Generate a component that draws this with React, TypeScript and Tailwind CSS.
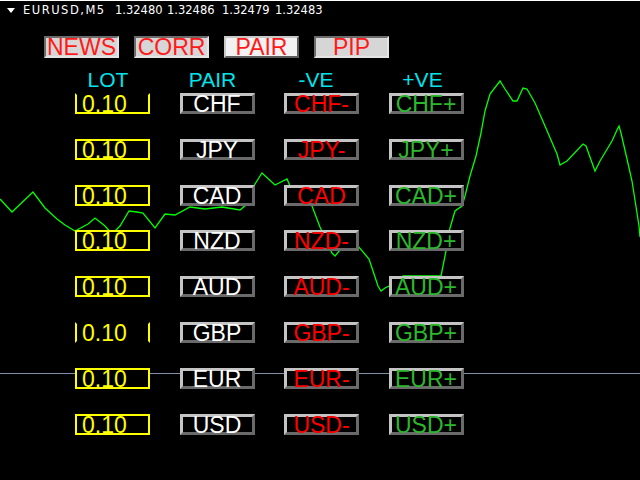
const rows = [
  { pair: "CHF", neg: "CHF-", lot: "full-no-top" },
  { pair: "JPY", neg: "JPY-", lot: "full" },
  { pair: "CAD", neg: "CAD", lot: "full" },
  { pair: "NZD", neg: "NZD-", lot: "full" },
  { pair: "AUD", neg: "AUD-", lot: "full" },
  { pair: "GBP", neg: "GBP-", lot: "sides" },
  { pair: "EUR", neg: "EUR-", lot: "full" },
  { pair: "USD", neg: "USD-", lot: "full" },
]

const price = [
  [0, 198], [12, 211], [33, 191], [45, 207], [57, 218], [65, 224], [75, 230], [88, 223],
  [95, 217], [105, 225], [112, 233], [120, 225], [129, 210], [137, 211], [143, 212],
  [155, 227], [165, 213], [175, 214], [190, 206], [205, 208], [222, 206], [240, 209],
  [247, 203], [255, 183], [262, 172], [275, 184], [287, 178], [290, 185], [300, 190],
  [312, 205], [320, 226], [332, 252], [335, 255], [340, 249], [358, 245], [369, 258],
  [373, 270], [378, 285], [381, 290], [385, 287], [395, 282], [403, 275], [418, 275],
  [441, 275], [446, 250], [450, 227], [455, 210], [462, 205], [465, 195], [470, 175],
  [476, 155], [481, 132], [485, 110], [490, 93], [500, 80], [505, 88], [513, 100],
  [517, 100], [523, 87], [527, 88], [535, 102], [545, 125], [557, 153], [560, 164],
  [567, 160], [583, 143], [586, 145], [595, 170], [600, 160], [612, 140], [617, 129],
  [619, 125], [621, 132], [627, 158], [632, 180], [637, 212], [639, 225], [640, 236],
]

function Chart() {
  return (
    <svg className="absolute inset-0 z-0" width="640" height="480" viewBox="0 0 640 480">
      <line x1="0" y1="372.5" x2="640" y2="372.5" stroke="#8290a8" strokeWidth="1" />
      <polyline
        points={price.map(p => p.join(",")).join(" ")}
        fill="none"
        stroke="#00ff00"
        strokeWidth="1.3"
      />
    </svg>
  )
}

function TopButton({ label, variant }: { label: string; variant: "down" | "up" }) {
  const look =
    variant === "up"
      ? "bg-[#f2f2f2] border-t-[#c8c8c8] border-l-[#c8c8c8] border-b-[#5c5c5c] border-r-[#5c5c5c]"
      : "bg-[#d6d6d6] border-t-[#6c6c6c] border-l-[#6c6c6c] border-b-[#e4e4e4] border-r-[#e4e4e4]"
  return (
    <div
      className={`w-[75px] h-[22px] border-2 box-border flex justify-center text-[23px] leading-[19px] text-[#ff1a1a] ${look}`}
    >
      {label}
    </div>
  )
}

function Cell({ text, color }: { text: string; color: string }) {
  return (
    <div
      className={`w-[75px] h-[21px] box-border bg-black border-[3px] border-t-[#c4c4c4] border-l-[#c4c4c4] border-b-[#6a6a6a] border-r-[#6a6a6a] flex justify-center text-[23px] leading-[16.5px] whitespace-nowrap ${color}`}
    >
      {text}
    </div>
  )
}

function LotBox({ kind }: { kind: string }) {
  const edges =
    kind === "sides"
      ? "border-x-2 border-y-2 border-y-black"
      : kind === "full-no-top"
        ? "border-2 border-t-black"
        : "border-2"
  return (
    <div
      className={`w-[75px] h-[21px] box-border bg-black border-[#ffff00] ${edges} pl-[5px] text-[23px] leading-[18.5px] text-[#ffff00]`}
    >
      0.10
    </div>
  )
}

export default function App() {
  return (
    <div
      className="relative w-[640px] h-[480px] bg-black overflow-hidden border-t border-white"
      style={{ fontFamily: '"Liberation Sans", Arial, sans-serif' }}
    >
      <Chart />
      <div className="relative z-10 flex flex-col">
        <div
          className="h-[19px] pl-[7px] flex items-center text-white text-[11.5px]"
          style={{ fontFamily: '"DejaVu Sans", sans-serif' }}
        >
          <svg width="8" height="6" viewBox="0 0 8 6" className="mr-[8px]">
            <polygon points="0,0 8,0 4,5" fill="#ffffff" />
          </svg>
          <span className="w-[92px] tracking-[1.5px]">EURUSD,M5</span>
          <span className="w-[52px]">1.32480</span>
          <span className="w-[55px]">1.32486</span>
          <span className="w-[53px]">1.32479</span>
          <span>1.32483</span>
        </div>

        <div className="mt-[16px] pl-[44px] flex gap-[15px]">
          <TopButton label="NEWS" variant="down" />
          <TopButton label="CORR" variant="down" />
          <TopButton label="PAIR" variant="up" />
          <TopButton label="PIP" variant="down" />
        </div>

        <div className="mt-[10px] pl-[75px] flex gap-[29.5px] h-[24px] text-[21px] leading-[24px] text-[#00e4ec]">
          <div className="w-[75px] text-center pr-[9px]">LOT</div>
          <div className="w-[75px] text-center pr-[9px]">PAIR</div>
          <div className="w-[75px] text-center pr-[11px]">-VE</div>
          <div className="w-[75px] text-center pr-[7px]">+VE</div>
        </div>

        <div className="mt-[1px] pl-[75px] flex flex-col gap-[24.8px]">
          {rows.map(r => (
            <div key={r.pair} className="flex gap-[29.5px]">
              <LotBox kind={r.lot} />
              <Cell text={r.pair} color="text-white" />
              <Cell text={r.neg} color="text-[#ff0000]" />
              <Cell text={`${r.pair}+`} color="text-[#2cb82c]" />
            </div>
          ))}
        </div>
      </div>
    </div>
  )
}
